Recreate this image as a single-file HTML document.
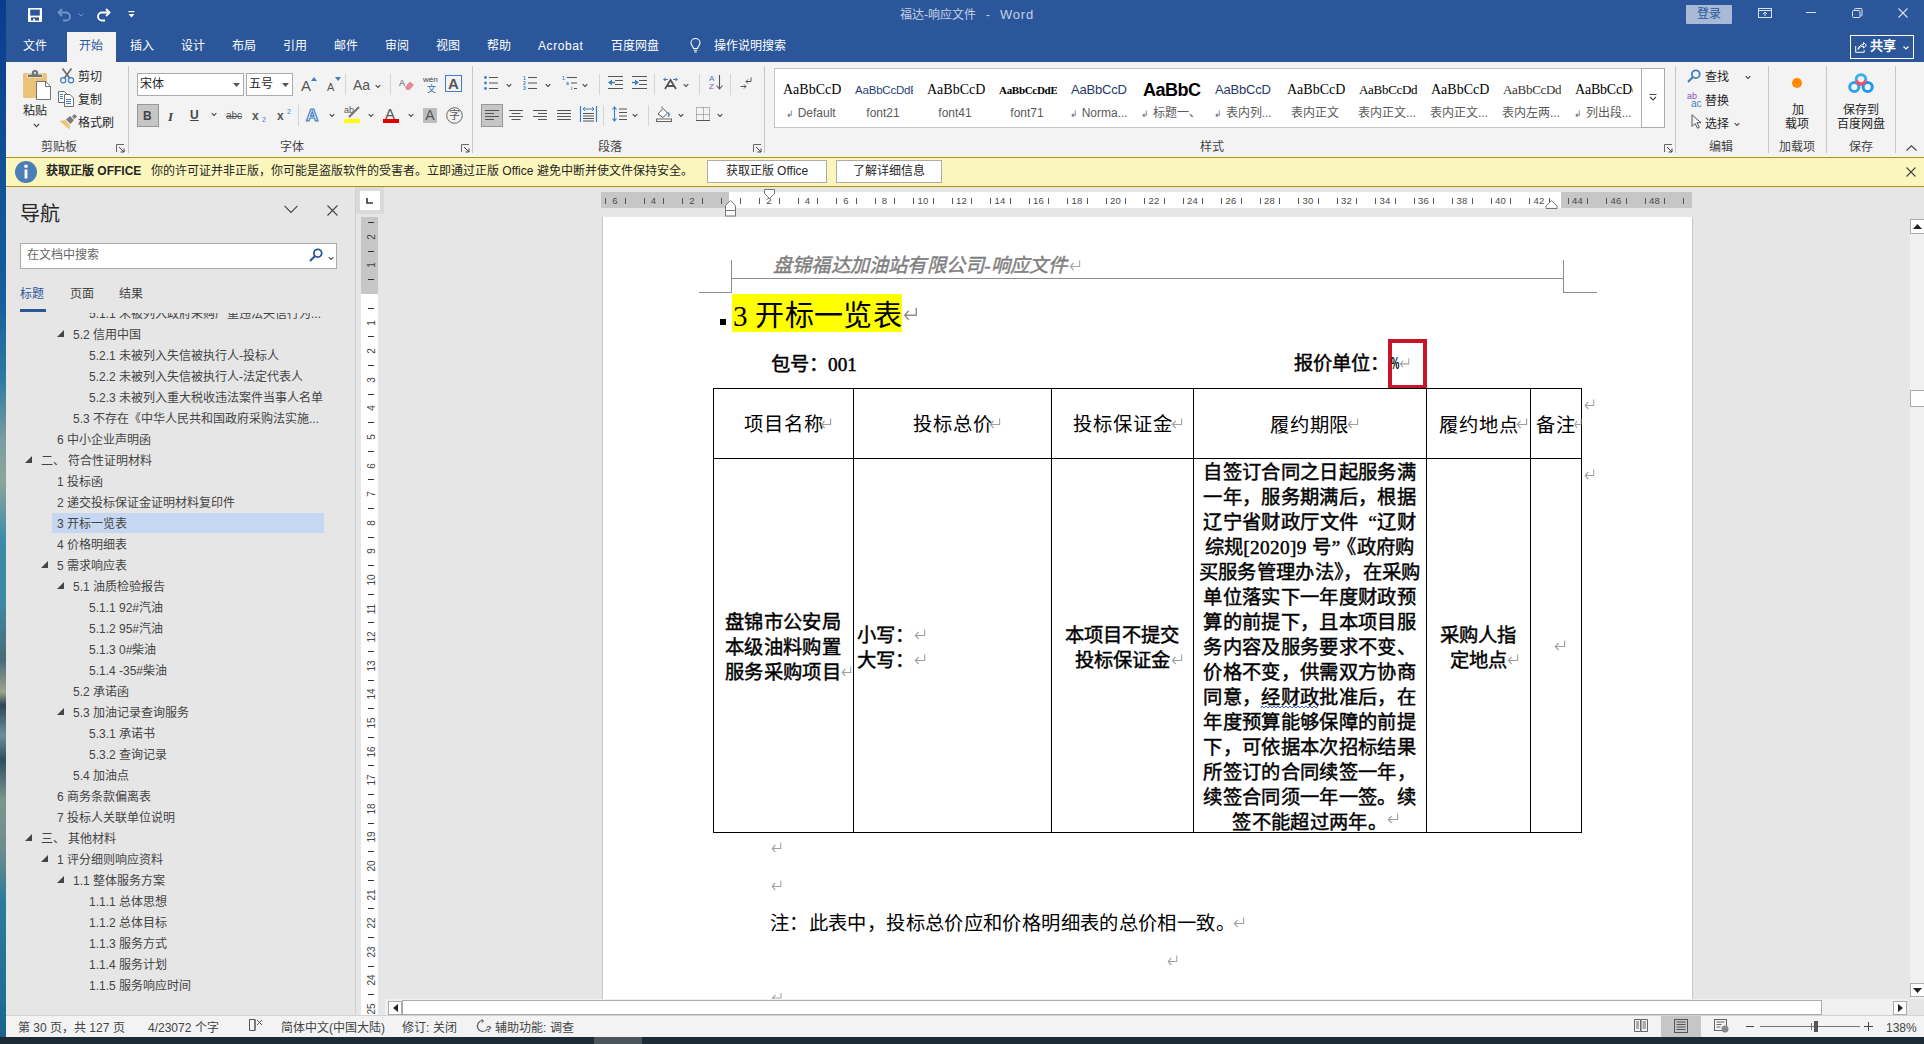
<!DOCTYPE html><html lang="zh-CN"><head><meta charset="utf-8"><title>Word</title><style>
*{box-sizing:border-box;margin:0;padding:0}
html,body{width:1924px;height:1044px;overflow:hidden}
body{position:relative;background:#E6E6E6;font-family:"Liberation Sans",sans-serif;font-size:12px;color:#262626}
.a{position:absolute;white-space:nowrap}
svg{position:absolute;overflow:visible}
</style></head><body>
<div class="a" style="left:0;top:0;width:6px;height:1044px;background:linear-gradient(180deg,#0A3C8E 0px,#0F4F96 150px,#165E9C 300px,#2E7AA0 380px,#7A9CA2 440px,#8FA59C 480px,#3D8BA8 540px,#3F8AA6 600px,#4A6A78 660px,#9DA58E 692px,#2C4556 705px,#6E8EA0 735px,#2F4E5E 760px,#7F958F 800px,#6D8C8E 850px,#2E7C9C 900px,#1F6E94 1000px,#1A5F88 1044px)"></div>
<div class="a" style="left:6px;top:0;width:1918px;height:62px;background:#2B579A"></div>
<div class="a" style="left:6px;top:62px;width:1918px;height:95px;background:#F3F3F3"></div>
<div class="a" style="left:6px;top:157px;width:1918px;height:30px;background:#FBF6BB;border-top:1px solid #B8900A;border-bottom:1px solid #B8900A"></div>
<div class="a" style="left:6px;top:187px;width:350px;height:827px;background:#E6E6E6;border-right:1px solid #CFCFCF"></div>
<div class="a" style="left:6px;top:1015px;width:1918px;height:22px;background:#F3F3F3;border-top:1px solid #D2D2D2"></div>
<div class="a" style="left:0;top:1037px;width:1924px;height:7px;background:#1D2B36"></div>
<div class="a" style="left:594px;top:1037px;width:48px;height:7px;background:#4A555C"></div>
<svg style="left:28px;top:8px" width="14" height="14" viewBox="0 0 14 14"><rect x="0" y="0" width="14" height="14" rx="0.8" fill="#fff"/><rect x="2.2" y="1.6" width="9.6" height="6" fill="#2B579A"/><rect x="3" y="9.4" width="8" height="3.2" fill="#2B579A"/><rect x="5" y="10.8" width="2" height="1.8" fill="#fff"/></svg>
<svg style="left:57px;top:8px" width="15" height="14" viewBox="0 0 15 14"><path d="M5 1L1.5 4.5L5 8M1.5 4.5H9a4 4 0 0 1 0 8H6" fill="none" stroke="#6F95C8" stroke-width="1.8"/></svg>
<svg style="left:78px;top:13px" width="6" height="4" viewBox="0 0 6 4"><path d="M0.5 0.5L3 3L5.5 0.5" fill="none" stroke="#6F95C8" stroke-width="1"/></svg>
<svg style="left:96px;top:8px" width="15" height="14" viewBox="0 0 15 14"><path d="M10 1L13.5 4.5L10 8M13.5 4.5H6a4 4 0 0 0 0 8H9" fill="none" stroke="#fff" stroke-width="1.8"/></svg>
<svg style="left:128px;top:11px" width="7" height="8" viewBox="0 0 7 8"><rect x="0.5" y="0" width="6" height="1.2" fill="#fff"/><path d="M0.5 3L3.5 6.5L6.5 3z" fill="#fff"/></svg>
<div class="a" style="left:900px;top:7px;font-size:12px;line-height:16px;color:#C5D1E6">福达-响应文件&nbsp;&nbsp;&nbsp;-&nbsp;&nbsp;&nbsp;<span style="letter-spacing:0.8px;font-size:13px">Word</span></div>
<div class="a" style="left:1686px;top:5px;width:46px;height:19px;background:#A8BAD6;border-radius:1px;color:#2B579A;font-size:12px;line-height:19px;text-align:center">登录</div>
<svg style="left:1758px;top:8px" width="14" height="10" viewBox="0 0 14 10"><rect x="0.5" y="0.5" width="13" height="9" fill="none" stroke="#D6E0EE" stroke-width="1"/><path d="M0.5 2.5h13" stroke="#D6E0EE"/><path d="M7 8V4M5 6l2-2l2 2" fill="none" stroke="#D6E0EE"/></svg>
<div class="a" style="left:1806px;top:12px;width:10px;height:1px;background:#D6E0EE"></div>
<svg style="left:1852px;top:8px" width="11" height="10" viewBox="0 0 11 10"><rect x="0.5" y="2.5" width="7.5" height="7" rx="1" fill="none" stroke="#D6E0EE"/><path d="M2.5 2.5V1.5a1 1 0 0 1 1-1h5.5a1 1 0 0 1 1 1v5.5a1 1 0 0 1-1 1H8" fill="none" stroke="#D6E0EE"/></svg>
<svg style="left:1898px;top:8px" width="10" height="10" viewBox="0 0 10 10"><path d="M0.5 0.5l9 9M9.5 0.5l-9 9" stroke="#D6E0EE" stroke-width="1.1"/></svg>
<div class="a" style="left:1850px;top:35px;width:64px;height:24px;border:1.5px solid #fff"></div>
<svg style="left:1855px;top:41px" width="12" height="12" viewBox="0 0 12 12"><path d="M0.7 5v6.3h8.5V9" fill="none" stroke="#fff" stroke-width="1"/><path d="M3 8.5C3.5 5 6 3.5 8.5 3.5V1.5L11.5 4.2L8.5 7V5.2C6.3 5.2 4.3 6.3 3 8.5z" fill="none" stroke="#fff" stroke-width="1"/></svg>
<div class="a" style="left:1870px;top:38px;font-size:13px;line-height:16px;color:#fff;font-weight:bold">共享</div>
<svg style="left:1903px;top:46px" width="6" height="4" viewBox="0 0 6 4"><path d="M0.5 0.5L3 3L5.5 0.5" fill="none" stroke="#fff" stroke-width="1.1"/></svg>
<div class="a" style="left:67px;top:32px;width:49px;height:30px;background:#F3F3F3"></div>
<div class="a" style="left:23px;top:38px;font-size:12px;line-height:16px;color:#fff">文件</div>
<div class="a" style="left:79px;top:38px;font-size:12px;line-height:16px;color:#2B579A">开始</div>
<div class="a" style="left:130px;top:38px;font-size:12px;line-height:16px;color:#fff">插入</div>
<div class="a" style="left:181px;top:38px;font-size:12px;line-height:16px;color:#fff">设计</div>
<div class="a" style="left:232px;top:38px;font-size:12px;line-height:16px;color:#fff">布局</div>
<div class="a" style="left:283px;top:38px;font-size:12px;line-height:16px;color:#fff">引用</div>
<div class="a" style="left:334px;top:38px;font-size:12px;line-height:16px;color:#fff">邮件</div>
<div class="a" style="left:385px;top:38px;font-size:12px;line-height:16px;color:#fff">审阅</div>
<div class="a" style="left:436px;top:38px;font-size:12px;line-height:16px;color:#fff">视图</div>
<div class="a" style="left:487px;top:38px;font-size:12px;line-height:16px;color:#fff">帮助</div>
<div class="a" style="left:538px;top:38px;font-size:12px;line-height:16px;color:#fff"><span style="letter-spacing:0.6px">Acrobat</span></div>
<div class="a" style="left:611px;top:38px;font-size:12px;line-height:16px;color:#fff">百度网盘</div>
<div class="a" style="left:714px;top:38px;font-size:12px;line-height:16px;color:#fff">操作说明搜索</div>
<svg style="left:690px;top:38px" width="11" height="15" viewBox="0 0 11 15"><path d="M3.5 10.5C3.5 8.5 1 7.5 1 5a4.5 4.5 0 0 1 9 0c0 2.5-2.5 3.5-2.5 5.5z" fill="none" stroke="#fff" stroke-width="1.1"/><path d="M3.8 12.3h3.4M4.3 14h2.4" stroke="#fff" stroke-width="1.1"/></svg>
<svg style="left:23px;top:70px" width="28" height="30" viewBox="0 0 28 30"><rect x="0" y="3" width="24" height="25" rx="1.5" fill="#EBC27A"/><rect x="4.5" y="3.5" width="15" height="4" fill="#F3F3F3"/><path d="M5 4.5h14v2.5H5z" fill="#737373"/><circle cx="12" cy="3.2" r="3.2" fill="#737373"/><circle cx="12" cy="3" r="1.1" fill="#F3F3F3"/><path d="M13.5 11.5h9.2l4.8 4.8v13.2h-14z" fill="#fff" stroke="#747474" stroke-width="1"/><path d="M22.5 11.5v5h5" fill="none" stroke="#747474" stroke-width="1"/></svg>
<div class="a" style="left:23px;top:103px;font-size:12px;line-height:16px;color:#262626;">粘贴</div>
<svg style="left:33px;top:123px" width="7" height="5" viewBox="0 0 7 5"><path d="M0.8 0.8L3.5 3.6L6.2 0.8" fill="none" stroke="#444" stroke-width="1.2"/></svg>
<svg style="left:59px;top:68px" width="16" height="16" viewBox="0 0 16 16"><path d="M3.5 0.5L10.8 10.5M12.5 0.5L5.2 10.5" stroke="#6A6A6A" stroke-width="1.7"/><circle cx="4.2" cy="12.2" r="2.6" fill="none" stroke="#3F7FC1" stroke-width="1.2"/><circle cx="12" cy="12.2" r="2.6" fill="none" stroke="#3F7FC1" stroke-width="1.2"/></svg>
<div class="a" style="left:78px;top:69px;font-size:12px;line-height:16px;color:#262626;">剪切</div>
<svg style="left:58px;top:91px" width="17" height="16" viewBox="0 0 17 16"><path d="M0.5 0.5h6l2.5 2.5v8.5H0.5z" fill="#fff" stroke="#6F6F6F"/><path d="M6.5 3.5h5.5l3.5 3.5v8.5h-9z" fill="#fff" stroke="#6F6F6F"/><path d="M2 3.5h3M2 5.5h3M2 7.5h3M8 8.5h5M8 10.5h5M8 12.5h5" stroke="#3F7FC1" stroke-width="1"/></svg>
<div class="a" style="left:78px;top:92px;font-size:12px;line-height:16px;color:#262626;">复制</div>
<svg style="left:59px;top:114px" width="18" height="16" viewBox="0 0 18 16"><path d="M0.5 7L6 6L11 11L10.5 15.5z" fill="#EBC27A"/><path d="M7 5.5L11 2L15 6L11.5 10z" fill="#7A7A7A"/><path d="M13 2.5L15.5 0L18 2.5L15.5 5z" fill="#7A7A7A"/></svg>
<div class="a" style="left:78px;top:115px;font-size:12px;line-height:16px;color:#262626;">格式刷</div>
<div class="a" style="left:41px;top:139px;font-size:12px;line-height:16px;color:#444;">剪贴板</div>
<svg style="left:116px;top:144px" width="9" height="9" viewBox="0 0 9 9"><path d="M0.5 8V0.5H8" fill="none" stroke="#666" stroke-width="1"/><path d="M3 3L8 8M8 4.5V8H4.5" fill="none" stroke="#444" stroke-width="1"/></svg>
<div class="a" style="left:128px;top:66px;width:1px;height:87px;background:#C6C6C6"></div>
<div class="a" style="left:137px;top:73px;width:107px;height:23px;background:#fff;border:1px solid #ABABAB"></div>
<div class="a" style="left:140px;top:76px;font-size:12px;line-height:16px;color:#262626;">宋体</div>
<svg style="left:233px;top:83px" width="7" height="4" viewBox="0 0 7 4"><path d="M0 0h7L3.5 4z" fill="#555"/></svg>
<div class="a" style="left:246px;top:73px;width:47px;height:23px;background:#fff;border:1px solid #ABABAB"></div>
<div class="a" style="left:249px;top:76px;font-size:12px;line-height:16px;color:#262626;">五号</div>
<svg style="left:282px;top:83px" width="7" height="4" viewBox="0 0 7 4"><path d="M0 0h7L3.5 4z" fill="#555"/></svg>
<div class="a" style="left:301px;top:76px;font-size:15px;line-height:19px;color:#555;font-weight:normal">A</div>
<svg style="left:311px;top:77px" width="6" height="4" viewBox="0 0 6 4"><path d="M0 4L3 0L6 4z" fill="#3F7FC1"/></svg>
<div class="a" style="left:327px;top:80px;font-size:11px;line-height:15px;color:#555;">A</div>
<svg style="left:335px;top:77px" width="6" height="4" viewBox="0 0 6 4"><path d="M0 0L3 4L6 0z" fill="#3F7FC1"/></svg>
<div class="a" style="left:345px;top:74px;width:1px;height:21px;background:#D5D5D5"></div>
<div class="a" style="left:353px;top:76px;font-size:14px;line-height:18px;color:#555;">Aa</div>
<svg style="left:375px;top:84px" width="6" height="5" viewBox="0 0 7 5"><path d="M0.8 0.8L3.5 3.6L6.2 0.8" fill="none" stroke="#444" stroke-width="1.2"/></svg>
<div class="a" style="left:390px;top:74px;width:1px;height:21px;background:#D5D5D5"></div>
<svg style="left:399px;top:77px" width="16" height="14" viewBox="0 0 16 14"><text x="0" y="9" font-size="9" fill="#555" font-family="Liberation Sans">A</text><path d="M6 10L11 4.5L15 8L10.5 13H7.5z" fill="#E88A96"/></svg>
<div class="a" style="left:423px;top:75px;font-size:8px;line-height:12px;color:#444;line-height:9px">wén</div>
<div class="a" style="left:427px;top:84px;font-size:9px;line-height:13px;color:#2E6DB4;line-height:10px">文</div>
<div class="a" style="left:445px;top:75px;width:17px;height:17px;border:1px solid #3F7FC1;color:#555;font-size:15px;line-height:15px;text-align:center;font-weight:bold">A</div>
<div class="a" style="left:137px;top:104px;width:22px;height:23px;background:#C6C6C6;border:1px solid #979797"></div>
<div class="a" style="left:143px;top:108px;font-size:12px;line-height:16px;color:#444;font-weight:bold">B</div>
<div class="a" style="left:168px;top:108px;font-size:13px;line-height:17px;color:#444;font-style:italic;font-family:Liberation Serif;font-weight:bold">I</div>
<div class="a" style="left:190px;top:107px;font-size:12px;line-height:16px;color:#444;text-decoration:underline;font-weight:bold">U</div>
<svg style="left:211px;top:112px" width="6" height="5" viewBox="0 0 7 5"><path d="M0.8 0.8L3.5 3.6L6.2 0.8" fill="none" stroke="#444" stroke-width="1.2"/></svg>
<div class="a" style="left:226px;top:109px;font-size:10px;line-height:14px;color:#555;text-decoration:line-through">abc</div>
<div class="a" style="left:252px;top:108px;font-size:12px;line-height:16px;color:#555;font-weight:bold">x</div>
<div class="a" style="left:262px;top:114px;font-size:7px;line-height:11px;color:#3F7FC1;">2</div>
<div class="a" style="left:277px;top:108px;font-size:12px;line-height:16px;color:#555;font-weight:bold">x</div>
<div class="a" style="left:287px;top:106px;font-size:7px;line-height:11px;color:#3F7FC1;">2</div>
<div class="a" style="left:298px;top:105px;width:1px;height:21px;background:#D5D5D5"></div>
<div class="a" style="left:306px;top:105px;font-size:17px;line-height:21px;color:#fff;-webkit-text-stroke:1.2px #3F7FC1;font-weight:bold">A</div>
<svg style="left:329px;top:113px" width="6" height="5" viewBox="0 0 7 5"><path d="M0.8 0.8L3.5 3.6L6.2 0.8" fill="none" stroke="#444" stroke-width="1.2"/></svg>
<div class="a" style="left:344px;top:104px;font-size:9px;line-height:13px;color:#555;">ab</div>
<svg style="left:346px;top:106px" width="16" height="12" viewBox="0 0 16 12"><path d="M3 11L13 1" stroke="#777" stroke-width="2.2"/></svg>
<div class="a" style="left:344px;top:119px;width:16px;height:4px;background:#FFFF00"></div>
<svg style="left:368px;top:113px" width="6" height="5" viewBox="0 0 7 5"><path d="M0.8 0.8L3.5 3.6L6.2 0.8" fill="none" stroke="#444" stroke-width="1.2"/></svg>
<div class="a" style="left:385px;top:104px;font-size:15px;line-height:19px;color:#555;">A</div>
<div class="a" style="left:383px;top:119px;width:16px;height:4px;background:#E40000"></div>
<svg style="left:408px;top:113px" width="6" height="5" viewBox="0 0 7 5"><path d="M0.8 0.8L3.5 3.6L6.2 0.8" fill="none" stroke="#444" stroke-width="1.2"/></svg>
<div class="a" style="left:423px;top:108px;width:14px;height:15px;background:#BDBDBD;color:#555;font-size:14px;line-height:15px;text-align:center">A</div>
<svg style="left:446px;top:107px" width="17" height="17" viewBox="0 0 17 17"><circle cx="8.5" cy="8.5" r="7.8" fill="none" stroke="#666" stroke-width="1"/></svg>
<div class="a" style="left:449px;top:109px;font-size:11px;line-height:15px;color:#555;line-height:12px">字</div>
<div class="a" style="left:280px;top:139px;font-size:12px;line-height:16px;color:#444;">字体</div>
<svg style="left:461px;top:144px" width="9" height="9" viewBox="0 0 9 9"><path d="M0.5 8V0.5H8" fill="none" stroke="#666" stroke-width="1"/><path d="M3 3L8 8M8 4.5V8H4.5" fill="none" stroke="#444" stroke-width="1"/></svg>
<div class="a" style="left:472px;top:66px;width:1px;height:87px;background:#C6C6C6"></div>
<svg style="left:484px;top:76px" width="15" height="14" viewBox="0 0 15 14"><circle cx="1.5" cy="1.5" r="1.4" fill="#3F7FC1"/><circle cx="1.5" cy="7" r="1.4" fill="#3F7FC1"/><circle cx="1.5" cy="12.5" r="1.4" fill="#3F7FC1"/><path d="M5 1.5h9M5 7h9M5 12.5h9" stroke="#555" stroke-width="1"/></svg>
<svg style="left:506px;top:83px" width="6" height="5" viewBox="0 0 7 5"><path d="M0.8 0.8L3.5 3.6L6.2 0.8" fill="none" stroke="#444" stroke-width="1.2"/></svg>
<svg style="left:523px;top:75px" width="15" height="15" viewBox="0 0 15 15"><text x="0" y="5" font-size="5" fill="#3F7FC1" font-family="Liberation Sans" font-weight="bold">1</text><text x="0" y="10" font-size="5" fill="#3F7FC1" font-family="Liberation Sans" font-weight="bold">2</text><text x="0" y="15" font-size="5" fill="#3F7FC1" font-family="Liberation Sans" font-weight="bold">3</text><path d="M5 2.5h9M5 8h9M5 13.5h9" stroke="#555" stroke-width="1"/></svg>
<svg style="left:545px;top:83px" width="6" height="5" viewBox="0 0 7 5"><path d="M0.8 0.8L3.5 3.6L6.2 0.8" fill="none" stroke="#444" stroke-width="1.2"/></svg>
<svg style="left:562px;top:75px" width="16" height="15" viewBox="0 0 16 15"><text x="0" y="5" font-size="5" fill="#3F7FC1" font-family="Liberation Sans" font-weight="bold">1</text><text x="4" y="10" font-size="5" fill="#3F7FC1" font-family="Liberation Sans" font-weight="bold">a</text><text x="9" y="15" font-size="5" fill="#3F7FC1" font-family="Liberation Sans" font-weight="bold">i</text><path d="M5 2.5h10M9 8h6M12 13.5h3" stroke="#555" stroke-width="1"/></svg>
<svg style="left:582px;top:83px" width="6" height="5" viewBox="0 0 7 5"><path d="M0.8 0.8L3.5 3.6L6.2 0.8" fill="none" stroke="#444" stroke-width="1.2"/></svg>
<div class="a" style="left:599px;top:74px;width:1px;height:21px;background:#D5D5D5"></div>
<svg style="left:607px;top:76px" width="17" height="14" viewBox="0 0 17 14"><path d="M1 0.5h15M8 4.5h8M8 8.5h8M1 12.5h15" stroke="#555" stroke-width="1"/><path d="M1 6.5L5 3.5V9.5z" fill="#3F7FC1"/><path d="M4 6.5h4" stroke="#3F7FC1" stroke-width="1.5"/></svg>
<svg style="left:631px;top:76px" width="17" height="14" viewBox="0 0 17 14"><path d="M1 0.5h15M8 4.5h8M8 8.5h8M1 12.5h15" stroke="#555" stroke-width="1"/><path d="M8 6.5L4 3.5V9.5z" fill="#3F7FC1"/><path d="M1 6.5h4" stroke="#3F7FC1" stroke-width="1.5"/></svg>
<div class="a" style="left:654px;top:74px;width:1px;height:21px;background:#D5D5D5"></div>
<svg style="left:662px;top:76px" width="17" height="14" viewBox="0 0 17 14"><path d="M3 13L8.5 4L14 13M5 10h7" fill="none" stroke="#555" stroke-width="1.8"/><path d="M1 3.5L3.5 1.5V5.5zM16 3.5L13.5 1.5V5.5z" fill="#3F7FC1"/><path d="M3 3.5h3M11 3.5h3" stroke="#3F7FC1" stroke-width="1"/></svg>
<svg style="left:683px;top:83px" width="6" height="5" viewBox="0 0 7 5"><path d="M0.8 0.8L3.5 3.6L6.2 0.8" fill="none" stroke="#444" stroke-width="1.2"/></svg>
<div class="a" style="left:699px;top:74px;width:1px;height:21px;background:#D5D5D5"></div>
<div class="a" style="left:709px;top:75px;font-size:8px;line-height:12px;color:#3F7FC1;line-height:8px">A</div>
<div class="a" style="left:709px;top:83px;font-size:8px;line-height:12px;color:#8E4FB8;line-height:8px">Z</div>
<svg style="left:716px;top:75px" width="7" height="15" viewBox="0 0 7 15"><path d="M3.5 0v14M0.5 10.5L3.5 14L6.5 10.5" fill="none" stroke="#555" stroke-width="1.1"/></svg>
<div class="a" style="left:730px;top:74px;width:1px;height:21px;background:#D5D5D5"></div>
<svg style="left:740px;top:77px" width="12" height="12" viewBox="0 0 12 12"><path d="M11 0.5v4H6M8 2.5L6 4.5L8 6.5" fill="none" stroke="#555" stroke-width="1"/><path d="M0.5 9.5H6M4 7.5L6 9.5L4 11.5" fill="none" stroke="#555" stroke-width="1"/></svg>
<div class="a" style="left:481px;top:104px;width:22px;height:23px;background:#C6C6C6;border:1px solid #979797"></div>
<svg style="left:485px;top:110px" width="14" height="11" viewBox="0 0 14 11"><path d="M0 0.5h14M0 3.5h9M0 6.5h14M0 9.5h9" stroke="#555" stroke-width="1"/></svg>
<svg style="left:509px;top:110px" width="14" height="11" viewBox="0 0 14 11"><path d="M0 0.5h14M2.5 3.5h9M0 6.5h14M2.5 9.5h9" stroke="#555" stroke-width="1"/></svg>
<svg style="left:533px;top:110px" width="14" height="11" viewBox="0 0 14 11"><path d="M0 0.5h14M5 3.5h9M0 6.5h14M5 9.5h9" stroke="#555" stroke-width="1"/></svg>
<svg style="left:557px;top:110px" width="14" height="11" viewBox="0 0 14 11"><path d="M0 0.5h14M0 3.5h14M0 6.5h14M0 9.5h14" stroke="#555" stroke-width="1"/></svg>
<svg style="left:580px;top:106px" width="17" height="16" viewBox="0 0 17 16"><path d="M0.5 0v16M16.5 0v16" stroke="#3F7FC1" stroke-width="1.2"/><path d="M3 3h11M5 1l-2 2l2 2M12 1l2 2l-2 2" fill="none" stroke="#3F7FC1" stroke-width="1"/><path d="M3 7.5h11M3 10h11M3 12.5h11M3 15h11" stroke="#555" stroke-width="1"/></svg>
<div class="a" style="left:603px;top:105px;width:1px;height:21px;background:#D5D5D5"></div>
<svg style="left:612px;top:106px" width="15" height="16" viewBox="0 0 15 16"><path d="M2.5 1v14M0.5 3.5L2.5 1L4.5 3.5M0.5 12.5L2.5 15L4.5 12.5" fill="none" stroke="#3F7FC1" stroke-width="1.1"/><path d="M7 3h8M7 6.5h8M7 10h8M7 13.5h8" stroke="#555" stroke-width="1"/></svg>
<svg style="left:632px;top:113px" width="6" height="5" viewBox="0 0 7 5"><path d="M0.8 0.8L3.5 3.6L6.2 0.8" fill="none" stroke="#444" stroke-width="1.2"/></svg>
<div class="a" style="left:648px;top:105px;width:1px;height:21px;background:#D5D5D5"></div>
<svg style="left:656px;top:106px" width="17" height="16" viewBox="0 0 17 16"><path d="M2 8L7 2.5L11.5 7L7 11.5z" fill="#fff" stroke="#555" stroke-width="1"/><path d="M6 2V0.5" stroke="#555"/><path d="M12 6.5c1.5 1 1.5 3 0 4" fill="none" stroke="#3F7FC1" stroke-width="1.5"/><rect x="0.5" y="13" width="15" height="2.5" fill="#fff" stroke="#666" stroke-width="1"/></svg>
<svg style="left:678px;top:113px" width="6" height="5" viewBox="0 0 7 5"><path d="M0.8 0.8L3.5 3.6L6.2 0.8" fill="none" stroke="#444" stroke-width="1.2"/></svg>
<svg style="left:696px;top:107px" width="14" height="14" viewBox="0 0 14 14"><path d="M0.5 0.5h13v13h-13zM7.5 0.5v13M0.5 7.5h13" fill="none" stroke="#777" stroke-width="1" stroke-dasharray="1 1"/><path d="M0 13.5h14" stroke="#555" stroke-width="1"/></svg>
<svg style="left:717px;top:113px" width="6" height="5" viewBox="0 0 7 5"><path d="M0.8 0.8L3.5 3.6L6.2 0.8" fill="none" stroke="#444" stroke-width="1.2"/></svg>
<div class="a" style="left:598px;top:139px;font-size:12px;line-height:16px;color:#444;">段落</div>
<svg style="left:753px;top:144px" width="9" height="9" viewBox="0 0 9 9"><path d="M0.5 8V0.5H8" fill="none" stroke="#666" stroke-width="1"/><path d="M3 3L8 8M8 4.5V8H4.5" fill="none" stroke="#444" stroke-width="1"/></svg>
<div class="a" style="left:764px;top:66px;width:1px;height:87px;background:#C6C6C6"></div>
<div class="a" style="left:774px;top:68px;width:868px;height:60px;background:#fff;border:1px solid #C6C6C6;border-right:none"></div>
<div class="a" style="left:783px;top:81px;width:58px;height:18px;overflow:hidden;text-align:left;font-family:Liberation Serif;font-size:14px;letter-spacing:0px;color:#000;line-height:18px">AaBbCcDc</div>
<div class="a" style="left:775px;top:105px;width:72px;text-align:center;font-size:12px;line-height:16px;color:#595959"><span style="font-size:9px;color:#666">↲</span> Default</div>
<div class="a" style="left:855px;top:81px;width:58px;height:18px;overflow:hidden;text-align:left;font-family:Liberation Sans;font-size:11.5px;font-weight:normal;letter-spacing:-0.2px;color:#1F3F7A;line-height:18px">AaBbCcDdE</div>
<div class="a" style="left:847px;top:105px;width:72px;text-align:center;font-size:12px;line-height:16px;color:#595959">font21</div>
<div class="a" style="left:927px;top:81px;width:58px;height:18px;overflow:hidden;text-align:left;font-family:Liberation Serif;font-size:14px;letter-spacing:0px;color:#000;line-height:18px">AaBbCcDc</div>
<div class="a" style="left:919px;top:105px;width:72px;text-align:center;font-size:12px;line-height:16px;color:#595959">font41</div>
<div class="a" style="left:999px;top:81px;width:58px;height:18px;overflow:hidden;text-align:left;font-family:Liberation Serif;font-size:11px;font-weight:bold;letter-spacing:-0.3px;color:#000;line-height:18px">AaBbCcDdEe</div>
<div class="a" style="left:991px;top:105px;width:72px;text-align:center;font-size:12px;line-height:16px;color:#595959">font71</div>
<div class="a" style="left:1071px;top:81px;width:58px;height:18px;overflow:hidden;text-align:left;font-family:Liberation Sans;font-size:13px;letter-spacing:-0.2px;color:#1F3864;line-height:18px">AaBbCcD</div>
<div class="a" style="left:1063px;top:105px;width:72px;text-align:center;font-size:12px;line-height:16px;color:#595959"><span style="font-size:9px;color:#666">↲</span> Norma...</div>
<div class="a" style="left:1143px;top:81px;width:58px;height:18px;overflow:hidden;text-align:left;font-family:Liberation Sans;font-size:18px;font-weight:bold;letter-spacing:-0.5px;color:#000;line-height:18px">AaBbCc</div>
<div class="a" style="left:1135px;top:105px;width:72px;text-align:center;font-size:12px;line-height:16px;color:#595959"><span style="font-size:9px;color:#666">↲</span> 标题一、</div>
<div class="a" style="left:1215px;top:81px;width:58px;height:18px;overflow:hidden;text-align:left;font-family:Liberation Sans;font-size:13px;letter-spacing:-0.2px;color:#1F3864;line-height:18px">AaBbCcD</div>
<div class="a" style="left:1207px;top:105px;width:72px;text-align:center;font-size:12px;line-height:16px;color:#595959"><span style="font-size:9px;color:#666">↲</span> 表内列...</div>
<div class="a" style="left:1287px;top:81px;width:58px;height:18px;overflow:hidden;text-align:left;font-family:Liberation Serif;font-size:14px;letter-spacing:0px;color:#000;line-height:18px">AaBbCcD</div>
<div class="a" style="left:1279px;top:105px;width:72px;text-align:center;font-size:12px;line-height:16px;color:#595959">表内正文</div>
<div class="a" style="left:1359px;top:81px;width:58px;height:18px;overflow:hidden;text-align:left;font-family:Liberation Serif;font-size:13px;letter-spacing:-0.3px;color:#000;line-height:18px">AaBbCcDdI</div>
<div class="a" style="left:1351px;top:105px;width:72px;text-align:center;font-size:12px;line-height:16px;color:#595959">表内正文...</div>
<div class="a" style="left:1431px;top:81px;width:58px;height:18px;overflow:hidden;text-align:left;font-family:Liberation Serif;font-size:14px;letter-spacing:0px;color:#000;line-height:18px">AaBbCcDc</div>
<div class="a" style="left:1423px;top:105px;width:72px;text-align:center;font-size:12px;line-height:16px;color:#595959">表内正文...</div>
<div class="a" style="left:1503px;top:81px;width:58px;height:18px;overflow:hidden;text-align:left;font-family:Liberation Serif;font-size:13px;letter-spacing:-0.3px;color:#333;line-height:18px">AaBbCcDdI</div>
<div class="a" style="left:1495px;top:105px;width:72px;text-align:center;font-size:12px;line-height:16px;color:#595959">表内左两...</div>
<div class="a" style="left:1575px;top:81px;width:58px;height:18px;overflow:hidden;text-align:left;font-family:Liberation Serif;font-size:14px;letter-spacing:-0.2px;color:#000;line-height:18px">AaBbCcDc</div>
<div class="a" style="left:1567px;top:105px;width:72px;text-align:center;font-size:12px;line-height:16px;color:#595959"><span style="font-size:9px;color:#666">↲</span> 列出段...</div>
<div class="a" style="left:1641px;top:68px;width:24px;height:60px;background:#fff;border:1px solid #ABABAB"></div>
<svg style="left:1649px;top:94px" width="8" height="7" viewBox="0 0 8 7"><path d="M0.5 0.5h7" stroke="#444"/><path d="M1 3L4 6L7 3" fill="none" stroke="#444" stroke-width="1.1"/></svg>
<div class="a" style="left:1200px;top:139px;font-size:12px;line-height:16px;color:#444;">样式</div>
<svg style="left:1664px;top:144px" width="9" height="9" viewBox="0 0 9 9"><path d="M0.5 8V0.5H8" fill="none" stroke="#666" stroke-width="1"/><path d="M3 3L8 8M8 4.5V8H4.5" fill="none" stroke="#444" stroke-width="1"/></svg>
<div class="a" style="left:1675px;top:66px;width:1px;height:87px;background:#C6C6C6"></div>
<svg style="left:1687px;top:69px" width="14" height="14" viewBox="0 0 14 14"><circle cx="8.8" cy="5.2" r="3.9" fill="none" stroke="#3F7FC1" stroke-width="1.8"/><path d="M6 8L1 13" stroke="#3F7FC1" stroke-width="2.2"/></svg>
<div class="a" style="left:1705px;top:69px;font-size:12px;line-height:16px;color:#262626;">查找</div>
<svg style="left:1745px;top:75px" width="6" height="5" viewBox="0 0 7 5"><path d="M0.8 0.8L3.5 3.6L6.2 0.8" fill="none" stroke="#444" stroke-width="1.2"/></svg>
<div class="a" style="left:1687px;top:92px;font-size:9px;line-height:13px;color:#8E4FB8;line-height:9px">ab</div>
<div class="a" style="left:1691px;top:99px;font-size:10px;line-height:14px;color:#3F7FC1;line-height:10px">ac</div>
<div class="a" style="left:1705px;top:93px;font-size:12px;line-height:16px;color:#262626;">替换</div>
<svg style="left:1691px;top:114px" width="11" height="15" viewBox="0 0 11 15"><path d="M1 0.8V12.5L4 9.5L6.5 14.2L8.3 13.3L5.9 8.7H10z" fill="none" stroke="#555" stroke-width="1"/></svg>
<div class="a" style="left:1705px;top:116px;font-size:12px;line-height:16px;color:#262626;">选择</div>
<svg style="left:1734px;top:122px" width="6" height="5" viewBox="0 0 7 5"><path d="M0.8 0.8L3.5 3.6L6.2 0.8" fill="none" stroke="#444" stroke-width="1.2"/></svg>
<div class="a" style="left:1709px;top:139px;font-size:12px;line-height:16px;color:#444;">编辑</div>
<div class="a" style="left:1768px;top:66px;width:1px;height:87px;background:#C6C6C6"></div>
<div class="a" style="left:1792px;top:78px;width:10px;height:10px;border-radius:50%;background:#FF8A00"></div>
<div class="a" style="left:1792px;top:102px;font-size:12px;line-height:16px;color:#262626;">加</div>
<div class="a" style="left:1785px;top:116px;font-size:12px;line-height:16px;color:#262626;">载项</div>
<div class="a" style="left:1779px;top:139px;font-size:12px;line-height:16px;color:#444;">加载项</div>
<div class="a" style="left:1826px;top:66px;width:1px;height:87px;background:#C6C6C6"></div>
<svg style="left:1848px;top:73px" width="26" height="21" viewBox="0 0 26 21"><circle cx="13" cy="6.5" r="4.8" fill="none" stroke="#3AB0EC" stroke-width="3"/><circle cx="6.3" cy="14" r="4.6" fill="none" stroke="#2EA3F2" stroke-width="3"/><circle cx="19.7" cy="14" r="4.6" fill="none" stroke="#1E98EA" stroke-width="3"/><path d="M8.4 7.5A4.8 4.8 0 0 0 17.6 7.5" fill="none" stroke="#F0506A" stroke-width="3"/></svg>
<div class="a" style="left:1843px;top:102px;font-size:12px;line-height:16px;color:#262626;">保存到</div>
<div class="a" style="left:1837px;top:116px;font-size:12px;line-height:16px;color:#262626;">百度网盘</div>
<div class="a" style="left:1849px;top:139px;font-size:12px;line-height:16px;color:#444;">保存</div>
<div class="a" style="left:1895px;top:66px;width:1px;height:87px;background:#C6C6C6"></div>
<svg style="left:1906px;top:145px" width="11" height="6" viewBox="0 0 11 6"><path d="M0.5 5.5L5.5 0.8L10.5 5.5" fill="none" stroke="#444" stroke-width="1.1"/></svg>
<svg style="left:15px;top:161px" width="22" height="22" viewBox="0 0 22 22"><circle cx="11" cy="11" r="11" fill="#4A7EB5"/><circle cx="11" cy="5.2" r="1.8" fill="#fff"/><rect x="9.6" y="8.5" width="2.8" height="9" fill="#fff"/></svg>
<div class="a" style="left:46px;top:163px;font-size:12px;line-height:16px;color:#262626;font-weight:bold">获取正版 OFFICE</div>
<div class="a" style="left:151px;top:163px;font-size:12px;line-height:16px;color:#262626;">你的许可证并非正版，你可能是盗版软件的受害者。立即通过正版 Office 避免中断并使文件保持安全。</div>
<div class="a" style="left:707px;top:160px;width:120px;height:23px;background:#fff;border:1px solid #ABABAB;text-align:center;font-size:12px;line-height:21px;color:#262626">获取正版 Office</div>
<div class="a" style="left:836px;top:160px;width:106px;height:23px;background:#fff;border:1px solid #ABABAB;text-align:center;font-size:12px;line-height:21px;color:#262626">了解详细信息</div>
<svg style="left:1906px;top:167px" width="10" height="10" viewBox="0 0 10 10"><path d="M0.5 0.5l9 9M9.5 0.5l-9 9" stroke="#444" stroke-width="1.1"/></svg>
<div class="a" style="left:20px;top:202px;font-size:20px;line-height:24px;color:#262626;line-height:24px">导航</div>
<svg style="left:284px;top:205px" width="14" height="9" viewBox="0 0 14 9"><path d="M0.5 0.8L7 7.5L13.5 0.8" fill="none" stroke="#444" stroke-width="1.1"/></svg>
<svg style="left:327px;top:205px" width="11" height="11" viewBox="0 0 11 11"><path d="M0.5 0.5l10 10M10.5 0.5l-10 10" stroke="#444" stroke-width="1.1"/></svg>
<div class="a" style="left:20px;top:243px;width:317px;height:26px;background:#fff;border:1px solid #ABABAB"></div>
<div class="a" style="left:27px;top:247px;font-size:12px;line-height:16px;color:#666;">在文档中搜索</div>
<svg style="left:309px;top:248px" width="14" height="14" viewBox="0 0 14 14"><circle cx="8.8" cy="5.2" r="3.9" fill="none" stroke="#2B579A" stroke-width="1.8"/><path d="M6 8L1 13" stroke="#2B579A" stroke-width="2.2"/></svg>
<svg style="left:328px;top:256px" width="6" height="5" viewBox="0 0 7 5"><path d="M0.8 0.8L3.5 3.6L6.2 0.8" fill="none" stroke="#444" stroke-width="1.2"/></svg>
<div class="a" style="left:20px;top:286px;font-size:12px;line-height:16px;color:#2B579A;">标题</div>
<div class="a" style="left:70px;top:286px;font-size:12px;line-height:16px;color:#444;">页面</div>
<div class="a" style="left:119px;top:286px;font-size:12px;line-height:16px;color:#444;">结果</div>
<div class="a" style="left:20px;top:309px;width:26px;height:3px;background:#2B579A"></div>
<div class="a" style="left:6px;top:313px;width:349px;height:700px;overflow:hidden">
<div class="a" style="left:83px;top:-7px;font-size:12px;line-height:16px;color:#444">5.1.1 未被列入政府采购严重违法失信行为...</div>
<svg style="left:51px;top:17px" width="7" height="7" viewBox="0 0 7 7"><path d="M7 0V7H0z" fill="#444"/></svg>
<div class="a" style="left:67px;top:14px;font-size:12px;line-height:16px;color:#444">5.2 信用中国</div>
<div class="a" style="left:83px;top:35px;font-size:12px;line-height:16px;color:#444">5.2.1 未被列入失信被执行人-投标人</div>
<div class="a" style="left:83px;top:56px;font-size:12px;line-height:16px;color:#444">5.2.2 未被列入失信被执行人-法定代表人</div>
<div class="a" style="left:83px;top:77px;font-size:12px;line-height:16px;color:#444">5.2.3 未被列入重大税收违法案件当事人名单</div>
<div class="a" style="left:67px;top:98px;font-size:12px;line-height:16px;color:#444">5.3 不存在《中华人民共和国政府采购法实施...</div>
<div class="a" style="left:51px;top:119px;font-size:12px;line-height:16px;color:#444">6 中小企业声明函</div>
<svg style="left:19px;top:143px" width="7" height="7" viewBox="0 0 7 7"><path d="M7 0V7H0z" fill="#444"/></svg>
<div class="a" style="left:35px;top:140px;font-size:12px;line-height:16px;color:#444">二、&nbsp;符合性证明材料</div>
<div class="a" style="left:51px;top:161px;font-size:12px;line-height:16px;color:#444">1 投标函</div>
<div class="a" style="left:51px;top:182px;font-size:12px;line-height:16px;color:#444">2 递交投标保证金证明材料复印件</div>
<div class="a" style="left:46px;top:200px;width:272px;height:20px;background:#C5D7F1"></div>
<div class="a" style="left:51px;top:203px;font-size:12px;line-height:16px;color:#444">3 开标一览表</div>
<div class="a" style="left:51px;top:224px;font-size:12px;line-height:16px;color:#444">4 价格明细表</div>
<svg style="left:35px;top:248px" width="7" height="7" viewBox="0 0 7 7"><path d="M7 0V7H0z" fill="#444"/></svg>
<div class="a" style="left:51px;top:245px;font-size:12px;line-height:16px;color:#444">5 需求响应表</div>
<svg style="left:51px;top:269px" width="7" height="7" viewBox="0 0 7 7"><path d="M7 0V7H0z" fill="#444"/></svg>
<div class="a" style="left:67px;top:266px;font-size:12px;line-height:16px;color:#444">5.1 油质检验报告</div>
<div class="a" style="left:83px;top:287px;font-size:12px;line-height:16px;color:#444">5.1.1 92#汽油</div>
<div class="a" style="left:83px;top:308px;font-size:12px;line-height:16px;color:#444">5.1.2 95#汽油</div>
<div class="a" style="left:83px;top:329px;font-size:12px;line-height:16px;color:#444">5.1.3 0#柴油</div>
<div class="a" style="left:83px;top:350px;font-size:12px;line-height:16px;color:#444">5.1.4 -35#柴油</div>
<div class="a" style="left:67px;top:371px;font-size:12px;line-height:16px;color:#444">5.2 承诺函</div>
<svg style="left:51px;top:395px" width="7" height="7" viewBox="0 0 7 7"><path d="M7 0V7H0z" fill="#444"/></svg>
<div class="a" style="left:67px;top:392px;font-size:12px;line-height:16px;color:#444">5.3 加油记录查询服务</div>
<div class="a" style="left:83px;top:413px;font-size:12px;line-height:16px;color:#444">5.3.1 承诺书</div>
<div class="a" style="left:83px;top:434px;font-size:12px;line-height:16px;color:#444">5.3.2 查询记录</div>
<div class="a" style="left:67px;top:455px;font-size:12px;line-height:16px;color:#444">5.4 加油点</div>
<div class="a" style="left:51px;top:476px;font-size:12px;line-height:16px;color:#444">6 商务条款偏离表</div>
<div class="a" style="left:51px;top:497px;font-size:12px;line-height:16px;color:#444">7 投标人关联单位说明</div>
<svg style="left:19px;top:521px" width="7" height="7" viewBox="0 0 7 7"><path d="M7 0V7H0z" fill="#444"/></svg>
<div class="a" style="left:35px;top:518px;font-size:12px;line-height:16px;color:#444">三、&nbsp;其他材料</div>
<svg style="left:35px;top:542px" width="7" height="7" viewBox="0 0 7 7"><path d="M7 0V7H0z" fill="#444"/></svg>
<div class="a" style="left:51px;top:539px;font-size:12px;line-height:16px;color:#444">1 评分细则响应资料</div>
<svg style="left:51px;top:563px" width="7" height="7" viewBox="0 0 7 7"><path d="M7 0V7H0z" fill="#444"/></svg>
<div class="a" style="left:67px;top:560px;font-size:12px;line-height:16px;color:#444">1.1 整体服务方案</div>
<div class="a" style="left:83px;top:581px;font-size:12px;line-height:16px;color:#444">1.1.1 总体思想</div>
<div class="a" style="left:83px;top:602px;font-size:12px;line-height:16px;color:#444">1.1.2 总体目标</div>
<div class="a" style="left:83px;top:623px;font-size:12px;line-height:16px;color:#444">1.1.3 服务方式</div>
<div class="a" style="left:83px;top:644px;font-size:12px;line-height:16px;color:#444">1.1.4 服务计划</div>
<div class="a" style="left:83px;top:665px;font-size:12px;line-height:16px;color:#444">1.1.5 服务响应时间</div>
</div>
<div class="a" style="left:356px;top:187px;width:28px;height:27px;background:#DADADA"></div>
<div class="a" style="left:360px;top:191px;width:20px;height:19px;background:#fff"></div>
<svg style="left:366px;top:198px" width="7" height="6" viewBox="0 0 7 6"><path d="M1 0v5h6" fill="none" stroke="#333" stroke-width="1.6"/></svg>
<div class="a" style="left:361px;top:217px;width:17px;height:77px;background:#C6C6C6"></div>
<div class="a" style="left:356px;top:999px;width:29px;height:16px;background:#E6E6E6"></div>
<div class="a" style="left:361px;top:294px;width:17px;height:721px;background:#fff"></div>
<div class="a" style="left:368px;top:222.0px;width:6px;height:1px;background:#333"></div>
<div class="a" style="left:363.5px;top:230.8px;width:16px;height:12px;font-size:10px;line-height:12px;text-align:center;color:#444;transform:rotate(-90deg)">2</div>
<div class="a" style="left:368px;top:250.6px;width:6px;height:1px;background:#333"></div>
<div class="a" style="left:363.5px;top:259.4px;width:16px;height:12px;font-size:10px;line-height:12px;text-align:center;color:#444;transform:rotate(-90deg)">1</div>
<div class="a" style="left:368px;top:279.2px;width:6px;height:1px;background:#333"></div>
<div class="a" style="left:368px;top:307.8px;width:6px;height:1px;background:#333"></div>
<div class="a" style="left:363.5px;top:316.6px;width:16px;height:12px;font-size:10px;line-height:12px;text-align:center;color:#444;transform:rotate(-90deg)">1</div>
<div class="a" style="left:368px;top:336.4px;width:6px;height:1px;background:#333"></div>
<div class="a" style="left:363.5px;top:345.2px;width:16px;height:12px;font-size:10px;line-height:12px;text-align:center;color:#444;transform:rotate(-90deg)">2</div>
<div class="a" style="left:368px;top:365.0px;width:6px;height:1px;background:#333"></div>
<div class="a" style="left:363.5px;top:373.8px;width:16px;height:12px;font-size:10px;line-height:12px;text-align:center;color:#444;transform:rotate(-90deg)">3</div>
<div class="a" style="left:368px;top:393.6px;width:6px;height:1px;background:#333"></div>
<div class="a" style="left:363.5px;top:402.4px;width:16px;height:12px;font-size:10px;line-height:12px;text-align:center;color:#444;transform:rotate(-90deg)">4</div>
<div class="a" style="left:368px;top:422.2px;width:6px;height:1px;background:#333"></div>
<div class="a" style="left:363.5px;top:431.0px;width:16px;height:12px;font-size:10px;line-height:12px;text-align:center;color:#444;transform:rotate(-90deg)">5</div>
<div class="a" style="left:368px;top:450.8px;width:6px;height:1px;background:#333"></div>
<div class="a" style="left:363.5px;top:459.6px;width:16px;height:12px;font-size:10px;line-height:12px;text-align:center;color:#444;transform:rotate(-90deg)">6</div>
<div class="a" style="left:368px;top:479.4px;width:6px;height:1px;background:#333"></div>
<div class="a" style="left:363.5px;top:488.2px;width:16px;height:12px;font-size:10px;line-height:12px;text-align:center;color:#444;transform:rotate(-90deg)">7</div>
<div class="a" style="left:368px;top:508.0px;width:6px;height:1px;background:#333"></div>
<div class="a" style="left:363.5px;top:516.8px;width:16px;height:12px;font-size:10px;line-height:12px;text-align:center;color:#444;transform:rotate(-90deg)">8</div>
<div class="a" style="left:368px;top:536.6px;width:6px;height:1px;background:#333"></div>
<div class="a" style="left:363.5px;top:545.4px;width:16px;height:12px;font-size:10px;line-height:12px;text-align:center;color:#444;transform:rotate(-90deg)">9</div>
<div class="a" style="left:368px;top:565.2px;width:6px;height:1px;background:#333"></div>
<div class="a" style="left:363.5px;top:574.0px;width:16px;height:12px;font-size:10px;line-height:12px;text-align:center;color:#444;transform:rotate(-90deg)">10</div>
<div class="a" style="left:368px;top:593.8px;width:6px;height:1px;background:#333"></div>
<div class="a" style="left:363.5px;top:602.6px;width:16px;height:12px;font-size:10px;line-height:12px;text-align:center;color:#444;transform:rotate(-90deg)">11</div>
<div class="a" style="left:368px;top:622.4px;width:6px;height:1px;background:#333"></div>
<div class="a" style="left:363.5px;top:631.2px;width:16px;height:12px;font-size:10px;line-height:12px;text-align:center;color:#444;transform:rotate(-90deg)">12</div>
<div class="a" style="left:368px;top:651.0px;width:6px;height:1px;background:#333"></div>
<div class="a" style="left:363.5px;top:659.8px;width:16px;height:12px;font-size:10px;line-height:12px;text-align:center;color:#444;transform:rotate(-90deg)">13</div>
<div class="a" style="left:368px;top:679.6px;width:6px;height:1px;background:#333"></div>
<div class="a" style="left:363.5px;top:688.4px;width:16px;height:12px;font-size:10px;line-height:12px;text-align:center;color:#444;transform:rotate(-90deg)">14</div>
<div class="a" style="left:368px;top:708.2px;width:6px;height:1px;background:#333"></div>
<div class="a" style="left:363.5px;top:717.0px;width:16px;height:12px;font-size:10px;line-height:12px;text-align:center;color:#444;transform:rotate(-90deg)">15</div>
<div class="a" style="left:368px;top:736.8px;width:6px;height:1px;background:#333"></div>
<div class="a" style="left:363.5px;top:745.6px;width:16px;height:12px;font-size:10px;line-height:12px;text-align:center;color:#444;transform:rotate(-90deg)">16</div>
<div class="a" style="left:368px;top:765.4px;width:6px;height:1px;background:#333"></div>
<div class="a" style="left:363.5px;top:774.2px;width:16px;height:12px;font-size:10px;line-height:12px;text-align:center;color:#444;transform:rotate(-90deg)">17</div>
<div class="a" style="left:368px;top:794.0px;width:6px;height:1px;background:#333"></div>
<div class="a" style="left:363.5px;top:802.8px;width:16px;height:12px;font-size:10px;line-height:12px;text-align:center;color:#444;transform:rotate(-90deg)">18</div>
<div class="a" style="left:368px;top:822.6px;width:6px;height:1px;background:#333"></div>
<div class="a" style="left:363.5px;top:831.4px;width:16px;height:12px;font-size:10px;line-height:12px;text-align:center;color:#444;transform:rotate(-90deg)">19</div>
<div class="a" style="left:368px;top:851.2px;width:6px;height:1px;background:#333"></div>
<div class="a" style="left:363.5px;top:860.0px;width:16px;height:12px;font-size:10px;line-height:12px;text-align:center;color:#444;transform:rotate(-90deg)">20</div>
<div class="a" style="left:368px;top:879.8px;width:6px;height:1px;background:#333"></div>
<div class="a" style="left:363.5px;top:888.6px;width:16px;height:12px;font-size:10px;line-height:12px;text-align:center;color:#444;transform:rotate(-90deg)">21</div>
<div class="a" style="left:368px;top:908.4px;width:6px;height:1px;background:#333"></div>
<div class="a" style="left:363.5px;top:917.2px;width:16px;height:12px;font-size:10px;line-height:12px;text-align:center;color:#444;transform:rotate(-90deg)">22</div>
<div class="a" style="left:368px;top:937.0px;width:6px;height:1px;background:#333"></div>
<div class="a" style="left:363.5px;top:945.8px;width:16px;height:12px;font-size:10px;line-height:12px;text-align:center;color:#444;transform:rotate(-90deg)">23</div>
<div class="a" style="left:368px;top:965.6px;width:6px;height:1px;background:#333"></div>
<div class="a" style="left:363.5px;top:974.4px;width:16px;height:12px;font-size:10px;line-height:12px;text-align:center;color:#444;transform:rotate(-90deg)">24</div>
<div class="a" style="left:368px;top:994.2px;width:6px;height:1px;background:#333"></div>
<div class="a" style="left:363.5px;top:1003.0px;width:16px;height:12px;font-size:10px;line-height:12px;text-align:center;color:#444;transform:rotate(-90deg)">25</div>
<div class="a" style="left:601px;top:192px;width:128px;height:16px;background:#C6C6C6"></div>
<div class="a" style="left:729px;top:192px;width:832px;height:16px;background:#fff"></div>
<div class="a" style="left:1561px;top:192px;width:131px;height:16px;background:#C6C6C6"></div>
<div class="a" style="left:605.3px;top:198px;width:1px;height:6px;background:#555"></div>
<div class="a" style="left:604.9px;top:194px;width:20px;text-align:center;font-size:9.5px;line-height:14px;color:#4A4A4A">6</div>
<div class="a" style="left:624.5px;top:198px;width:1px;height:6px;background:#555"></div>
<div class="a" style="left:643.8px;top:198px;width:1px;height:6px;background:#555"></div>
<div class="a" style="left:643.4px;top:194px;width:20px;text-align:center;font-size:9.5px;line-height:14px;color:#4A4A4A">4</div>
<div class="a" style="left:663.0px;top:198px;width:1px;height:6px;background:#555"></div>
<div class="a" style="left:682.3px;top:198px;width:1px;height:6px;background:#555"></div>
<div class="a" style="left:681.9px;top:194px;width:20px;text-align:center;font-size:9.5px;line-height:14px;color:#4A4A4A">2</div>
<div class="a" style="left:701.5px;top:198px;width:1px;height:6px;background:#555"></div>
<div class="a" style="left:720.8px;top:198px;width:1px;height:6px;background:#555"></div>
<div class="a" style="left:740.0px;top:198px;width:1px;height:6px;background:#555"></div>
<div class="a" style="left:759.3px;top:198px;width:1px;height:6px;background:#555"></div>
<div class="a" style="left:758.9px;top:194px;width:20px;text-align:center;font-size:9.5px;line-height:14px;color:#4A4A4A">2</div>
<div class="a" style="left:778.5px;top:198px;width:1px;height:6px;background:#555"></div>
<div class="a" style="left:797.8px;top:198px;width:1px;height:6px;background:#555"></div>
<div class="a" style="left:797.4px;top:194px;width:20px;text-align:center;font-size:9.5px;line-height:14px;color:#4A4A4A">4</div>
<div class="a" style="left:817.0px;top:198px;width:1px;height:6px;background:#555"></div>
<div class="a" style="left:836.3px;top:198px;width:1px;height:6px;background:#555"></div>
<div class="a" style="left:835.9px;top:194px;width:20px;text-align:center;font-size:9.5px;line-height:14px;color:#4A4A4A">6</div>
<div class="a" style="left:855.5px;top:198px;width:1px;height:6px;background:#555"></div>
<div class="a" style="left:874.8px;top:198px;width:1px;height:6px;background:#555"></div>
<div class="a" style="left:874.4px;top:194px;width:20px;text-align:center;font-size:9.5px;line-height:14px;color:#4A4A4A">8</div>
<div class="a" style="left:894.0px;top:198px;width:1px;height:6px;background:#555"></div>
<div class="a" style="left:913.3px;top:198px;width:1px;height:6px;background:#555"></div>
<div class="a" style="left:912.9px;top:194px;width:20px;text-align:center;font-size:9.5px;line-height:14px;color:#4A4A4A">10</div>
<div class="a" style="left:932.5px;top:198px;width:1px;height:6px;background:#555"></div>
<div class="a" style="left:951.8px;top:198px;width:1px;height:6px;background:#555"></div>
<div class="a" style="left:951.4px;top:194px;width:20px;text-align:center;font-size:9.5px;line-height:14px;color:#4A4A4A">12</div>
<div class="a" style="left:971.0px;top:198px;width:1px;height:6px;background:#555"></div>
<div class="a" style="left:990.3px;top:198px;width:1px;height:6px;background:#555"></div>
<div class="a" style="left:989.9px;top:194px;width:20px;text-align:center;font-size:9.5px;line-height:14px;color:#4A4A4A">14</div>
<div class="a" style="left:1009.5px;top:198px;width:1px;height:6px;background:#555"></div>
<div class="a" style="left:1028.8px;top:198px;width:1px;height:6px;background:#555"></div>
<div class="a" style="left:1028.4px;top:194px;width:20px;text-align:center;font-size:9.5px;line-height:14px;color:#4A4A4A">16</div>
<div class="a" style="left:1048.0px;top:198px;width:1px;height:6px;background:#555"></div>
<div class="a" style="left:1067.3px;top:198px;width:1px;height:6px;background:#555"></div>
<div class="a" style="left:1066.9px;top:194px;width:20px;text-align:center;font-size:9.5px;line-height:14px;color:#4A4A4A">18</div>
<div class="a" style="left:1086.5px;top:198px;width:1px;height:6px;background:#555"></div>
<div class="a" style="left:1105.8px;top:198px;width:1px;height:6px;background:#555"></div>
<div class="a" style="left:1105.4px;top:194px;width:20px;text-align:center;font-size:9.5px;line-height:14px;color:#4A4A4A">20</div>
<div class="a" style="left:1125.0px;top:198px;width:1px;height:6px;background:#555"></div>
<div class="a" style="left:1144.3px;top:198px;width:1px;height:6px;background:#555"></div>
<div class="a" style="left:1143.9px;top:194px;width:20px;text-align:center;font-size:9.5px;line-height:14px;color:#4A4A4A">22</div>
<div class="a" style="left:1163.5px;top:198px;width:1px;height:6px;background:#555"></div>
<div class="a" style="left:1182.8px;top:198px;width:1px;height:6px;background:#555"></div>
<div class="a" style="left:1182.4px;top:194px;width:20px;text-align:center;font-size:9.5px;line-height:14px;color:#4A4A4A">24</div>
<div class="a" style="left:1202.0px;top:198px;width:1px;height:6px;background:#555"></div>
<div class="a" style="left:1221.3px;top:198px;width:1px;height:6px;background:#555"></div>
<div class="a" style="left:1220.9px;top:194px;width:20px;text-align:center;font-size:9.5px;line-height:14px;color:#4A4A4A">26</div>
<div class="a" style="left:1240.5px;top:198px;width:1px;height:6px;background:#555"></div>
<div class="a" style="left:1259.8px;top:198px;width:1px;height:6px;background:#555"></div>
<div class="a" style="left:1259.4px;top:194px;width:20px;text-align:center;font-size:9.5px;line-height:14px;color:#4A4A4A">28</div>
<div class="a" style="left:1279.0px;top:198px;width:1px;height:6px;background:#555"></div>
<div class="a" style="left:1298.3px;top:198px;width:1px;height:6px;background:#555"></div>
<div class="a" style="left:1297.9px;top:194px;width:20px;text-align:center;font-size:9.5px;line-height:14px;color:#4A4A4A">30</div>
<div class="a" style="left:1317.5px;top:198px;width:1px;height:6px;background:#555"></div>
<div class="a" style="left:1336.8px;top:198px;width:1px;height:6px;background:#555"></div>
<div class="a" style="left:1336.4px;top:194px;width:20px;text-align:center;font-size:9.5px;line-height:14px;color:#4A4A4A">32</div>
<div class="a" style="left:1356.0px;top:198px;width:1px;height:6px;background:#555"></div>
<div class="a" style="left:1375.3px;top:198px;width:1px;height:6px;background:#555"></div>
<div class="a" style="left:1374.9px;top:194px;width:20px;text-align:center;font-size:9.5px;line-height:14px;color:#4A4A4A">34</div>
<div class="a" style="left:1394.5px;top:198px;width:1px;height:6px;background:#555"></div>
<div class="a" style="left:1413.8px;top:198px;width:1px;height:6px;background:#555"></div>
<div class="a" style="left:1413.4px;top:194px;width:20px;text-align:center;font-size:9.5px;line-height:14px;color:#4A4A4A">36</div>
<div class="a" style="left:1433.0px;top:198px;width:1px;height:6px;background:#555"></div>
<div class="a" style="left:1452.3px;top:198px;width:1px;height:6px;background:#555"></div>
<div class="a" style="left:1451.9px;top:194px;width:20px;text-align:center;font-size:9.5px;line-height:14px;color:#4A4A4A">38</div>
<div class="a" style="left:1471.5px;top:198px;width:1px;height:6px;background:#555"></div>
<div class="a" style="left:1490.8px;top:198px;width:1px;height:6px;background:#555"></div>
<div class="a" style="left:1490.4px;top:194px;width:20px;text-align:center;font-size:9.5px;line-height:14px;color:#4A4A4A">40</div>
<div class="a" style="left:1510.0px;top:198px;width:1px;height:6px;background:#555"></div>
<div class="a" style="left:1529.3px;top:198px;width:1px;height:6px;background:#555"></div>
<div class="a" style="left:1528.9px;top:194px;width:20px;text-align:center;font-size:9.5px;line-height:14px;color:#4A4A4A">42</div>
<div class="a" style="left:1548.5px;top:198px;width:1px;height:6px;background:#555"></div>
<div class="a" style="left:1567.8px;top:198px;width:1px;height:6px;background:#555"></div>
<div class="a" style="left:1567.4px;top:194px;width:20px;text-align:center;font-size:9.5px;line-height:14px;color:#4A4A4A">44</div>
<div class="a" style="left:1587.0px;top:198px;width:1px;height:6px;background:#555"></div>
<div class="a" style="left:1606.3px;top:198px;width:1px;height:6px;background:#555"></div>
<div class="a" style="left:1605.9px;top:194px;width:20px;text-align:center;font-size:9.5px;line-height:14px;color:#4A4A4A">46</div>
<div class="a" style="left:1625.5px;top:198px;width:1px;height:6px;background:#555"></div>
<div class="a" style="left:1644.8px;top:198px;width:1px;height:6px;background:#555"></div>
<div class="a" style="left:1644.4px;top:194px;width:20px;text-align:center;font-size:9.5px;line-height:14px;color:#4A4A4A">48</div>
<div class="a" style="left:1664.0px;top:198px;width:1px;height:6px;background:#555"></div>
<div class="a" style="left:1683.3px;top:198px;width:1px;height:6px;background:#555"></div>
<svg style="left:724px;top:200px" width="13" height="17" viewBox="0 0 13 17"><path d="M6.5 0.5L11.5 5.5V10.5H1.5V5.5z" fill="#fff" stroke="#777" stroke-width="1"/><rect x="1.5" y="10.5" width="10" height="5.5" fill="#fff" stroke="#777" stroke-width="1"/></svg>
<svg style="left:764px;top:189px" width="12" height="10" viewBox="0 0 12 10"><path d="M0.5 0.5h10V4.5L5.5 9.5L0.5 4.5z" fill="#fff" stroke="#777" stroke-width="1"/></svg>
<svg style="left:1545px;top:200px" width="13" height="9" viewBox="0 0 13 9"><path d="M6.5 0.5L12 6v2.5H1V6z" fill="#fff" stroke="#777" stroke-width="1"/></svg>
<div class="a" style="left:602px;top:217px;width:1091px;height:782px;background:#fff;border-left:1px solid #C6C6C6;border-right:1px solid #C6C6C6"></div>
<div class="a" style="left:1910px;top:219px;width:14px;height:780px;background:#F0F0F0"></div>
<div class="a" style="left:1910px;top:219px;width:14px;height:15px;background:#fff;border:1px solid #ABABAB;border-right:none"></div>
<svg style="left:1913px;top:224px" width="9" height="5" viewBox="0 0 9 5"><path d="M0 5L4.5 0L9 5z" fill="#222"/></svg>
<div class="a" style="left:1910px;top:390px;width:14px;height:17px;background:#fff;border:1px solid #ABABAB;border-right:none"></div>
<div class="a" style="left:1910px;top:983px;width:14px;height:14px;background:#fff;border:1px solid #ABABAB;border-right:none"></div>
<svg style="left:1913px;top:988px" width="9" height="5" viewBox="0 0 9 5"><path d="M0 0L4.5 5L9 0z" fill="#222"/></svg>
<div class="a" style="left:385px;top:999px;width:1522px;height:16px;background:#F0F0F0"></div>
<div class="a" style="left:1907px;top:999px;width:17px;height:16px;background:#E6E6E6"></div>
<div class="a" style="left:388px;top:1001px;width:14px;height:14px;background:#fff;border:1px solid #ABABAB"></div>
<svg style="left:393px;top:1004px" width="5" height="8" viewBox="0 0 5 8"><path d="M5 0L0 4L5 8z" fill="#222"/></svg>
<div class="a" style="left:402px;top:1000px;width:1420px;height:15px;background:#fff;border:1px solid #ABABAB"></div>
<div class="a" style="left:1893px;top:1001px;width:14px;height:14px;background:#fff;border:1px solid #ABABAB"></div>
<svg style="left:1898px;top:1004px" width="5" height="8" viewBox="0 0 5 8"><path d="M0 0L5 4L0 8z" fill="#222"/></svg>
<div class="a" style="left:18px;top:1020px;font-size:12px;line-height:16px;color:#444;">第 30 页，共 127 页</div>
<div class="a" style="left:148px;top:1020px;font-size:12px;line-height:16px;color:#444;">4/23072 个字</div>
<div class="a" style="left:281px;top:1020px;font-size:12px;line-height:16px;color:#444;">简体中文(中国大陆)</div>
<div class="a" style="left:402px;top:1020px;font-size:12px;line-height:16px;color:#444;">修订: 关闭</div>
<div class="a" style="left:495px;top:1020px;font-size:12px;line-height:16px;color:#444;">辅助功能: 调查</div>
<svg style="left:249px;top:1019px" width="14" height="13" viewBox="0 0 14 13"><path d="M0.5 0.5h5.5v11H0.5zM6 0.5v11" fill="none" stroke="#555" stroke-width="1"/><path d="M8 1l5 5M13 1l-5 5" stroke="#555" stroke-width="1"/></svg>
<svg style="left:477px;top:1019px" width="16" height="14" viewBox="0 0 16 14"><path d="M6 1.5A5.5 5.5 0 1 0 10.5 10" fill="none" stroke="#555" stroke-width="1.2"/><path d="M4.5 0.5L6.5 1.8L5 3.8" fill="none" stroke="#555" stroke-width="1"/><text x="9" y="13" font-size="9" font-weight="bold" fill="#555" font-family="Liberation Sans">?</text></svg>
<svg style="left:1634px;top:1019px" width="14" height="13" viewBox="0 0 14 13"><path d="M0.5 0.5h6v12h-6zM7 0.5h6.5v12H7z" fill="none" stroke="#666"/><path d="M2 3h3M2 5h3M2 7h3M2 9h3M8.5 3h3.5M8.5 5h3.5M8.5 7h3.5M8.5 9h3.5" stroke="#666"/></svg>
<div class="a" style="left:1661px;top:1016px;width:40px;height:21px;background:#C6C6C6"></div>
<svg style="left:1674px;top:1019px" width="14" height="14" viewBox="0 0 14 14"><rect x="0.5" y="0.5" width="13" height="13" fill="none" stroke="#555"/><path d="M2.5 3h9M2.5 5.5h9M2.5 8h9M2.5 10.5h9" stroke="#555"/></svg>
<svg style="left:1714px;top:1019px" width="15" height="14" viewBox="0 0 15 14"><rect x="0.5" y="0.5" width="12" height="11" fill="none" stroke="#666"/><path d="M2.5 3h8M2.5 5.5h5M2.5 8h4" stroke="#666"/><circle cx="11" cy="10" r="3.5" fill="#888"/></svg>
<div class="a" style="left:1746px;top:1026px;width:8px;height:1px;background:#444"></div>
<div class="a" style="left:1760px;top:1026px;width:100px;height:1px;background:#777"></div>
<div class="a" style="left:1814px;top:1021px;width:4px;height:11px;background:#555"></div>
<div class="a" style="left:1811px;top:1023px;width:1px;height:7px;background:#777"></div>
<div class="a" style="left:1864px;top:1026px;width:9px;height:1px;background:#444"></div>
<div class="a" style="left:1868px;top:1022px;width:1px;height:9px;background:#444"></div>
<div class="a" style="left:1886px;top:1020px;font-size:12px;line-height:16px;color:#444;">138%</div>
<div class="a" style="left:773px;top:253px;font-family:'Liberation Serif',serif;font-size:19.3px;line-height:25px;font-weight:400;-webkit-text-stroke:0.45px #7F7F7F;color:#7F7F7F;font-style:italic;letter-spacing:0.2px">盘锦福达加油站有限公司-响应文件</div>
<svg style="left:1069px;top:260px" width="12" height="11" viewBox="0 0 13 11" preserveAspectRatio="none"><path d="M11.5 0.5V6.5H1.5M5 3L1.5 6.5L5 10" fill="none" stroke="#A6A6A6" stroke-width="1.2"/></svg>
<div class="a" style="left:731px;top:278px;width:833px;height:1px;background:#8C8C8C"></div>
<div class="a" style="left:731px;top:260px;width:1px;height:33px;background:#8C8C8C"></div>
<div class="a" style="left:699px;top:292px;width:33px;height:1px;background:#8C8C8C"></div>
<div class="a" style="left:1563px;top:260px;width:1px;height:33px;background:#8C8C8C"></div>
<div class="a" style="left:1563px;top:292px;width:34px;height:1px;background:#8C8C8C"></div>
<div class="a" style="left:732px;top:294px;width:170px;height:38px;background:#FFFF00"></div>
<div class="a" style="left:720px;top:319px;width:6px;height:6px;background:#000"></div>
<div class="a" style="left:733px;top:297px;font-family:'Liberation Serif',serif;font-size:29px;line-height:38px;font-weight:400;color:#000;letter-spacing:0.3px">3 开标一览表</div>
<svg style="left:903px;top:307px" width="15" height="14" viewBox="0 0 13 11" preserveAspectRatio="none"><path d="M11.5 0.5V6.5H1.5M5 3L1.5 6.5L5 10" fill="none" stroke="#8C8C8C" stroke-width="1.2"/></svg>
<div class="a" style="left:771px;top:352px;font-family:'Liberation Serif',serif;font-size:19.3px;line-height:25px;font-weight:400;-webkit-text-stroke:0.45px #000;color:#000;">包号：001</div>
<div class="a" style="left:1294px;top:351px;font-family:'Liberation Serif',serif;font-size:19.3px;line-height:25px;font-weight:400;-webkit-text-stroke:0.45px #000;color:#000;">报价单位：</div>
<svg style="left:1399px;top:358px" width="11" height="10" viewBox="0 0 13 11" preserveAspectRatio="none"><path d="M11.5 0.5V6.5H1.5M5 3L1.5 6.5L5 10" fill="none" stroke="#A0A0A0" stroke-width="1.2"/></svg>
<div class="a" style="left:1388px;top:339px;width:39px;height:50px;border:4px solid #CA1428"></div>
<div class="a" style="left:1391px;top:354px;font-family:Liberation Sans;font-size:17px;line-height:20px;font-weight:bold;color:#000;transform:scaleX(0.55);transform-origin:left">%</div>
<div class="a" style="left:713px;top:388px;width:1px;height:445px;background:#000"></div>
<div class="a" style="left:853px;top:388px;width:1px;height:445px;background:#000"></div>
<div class="a" style="left:1051px;top:388px;width:1px;height:445px;background:#000"></div>
<div class="a" style="left:1193px;top:388px;width:1px;height:445px;background:#000"></div>
<div class="a" style="left:1426px;top:388px;width:1px;height:445px;background:#000"></div>
<div class="a" style="left:1530px;top:388px;width:1px;height:445px;background:#000"></div>
<div class="a" style="left:1581px;top:388px;width:1px;height:445px;background:#000"></div>
<div class="a" style="left:713px;top:388px;width:869px;height:1px;background:#000"></div>
<div class="a" style="left:713px;top:458px;width:869px;height:1px;background:#000"></div>
<div class="a" style="left:713px;top:832px;width:869px;height:1px;background:#000"></div>
<div class="a" style="left:744px;top:412px;font-family:'Liberation Serif',serif;font-size:19.3px;line-height:25px;font-weight:400;color:#000;letter-spacing:1px">项目名称</div>
<svg style="left:820px;top:418px" width="12" height="11" viewBox="0 0 13 11" preserveAspectRatio="none"><path d="M11.5 0.5V6.5H1.5M5 3L1.5 6.5L5 10" fill="none" stroke="#A0A0A0" stroke-width="1.2"/></svg>
<div class="a" style="left:913px;top:412px;font-family:'Liberation Serif',serif;font-size:19.3px;line-height:25px;font-weight:400;color:#000;letter-spacing:1px">投标总价</div>
<svg style="left:989px;top:418px" width="12" height="11" viewBox="0 0 13 11" preserveAspectRatio="none"><path d="M11.5 0.5V6.5H1.5M5 3L1.5 6.5L5 10" fill="none" stroke="#A0A0A0" stroke-width="1.2"/></svg>
<div class="a" style="left:1073px;top:412px;font-family:'Liberation Serif',serif;font-size:19.3px;line-height:25px;font-weight:400;color:#000;letter-spacing:1.1px">投标保证金</div>
<svg style="left:1171px;top:418px" width="12" height="11" viewBox="0 0 13 11" preserveAspectRatio="none"><path d="M11.5 0.5V6.5H1.5M5 3L1.5 6.5L5 10" fill="none" stroke="#A0A0A0" stroke-width="1.2"/></svg>
<div class="a" style="left:1270px;top:413px;font-family:'Liberation Serif',serif;font-size:19.3px;line-height:25px;font-weight:400;color:#000;letter-spacing:0.8px">履约期限</div>
<svg style="left:1347px;top:418px" width="12" height="11" viewBox="0 0 13 11" preserveAspectRatio="none"><path d="M11.5 0.5V6.5H1.5M5 3L1.5 6.5L5 10" fill="none" stroke="#A0A0A0" stroke-width="1.2"/></svg>
<div class="a" style="left:1439px;top:413px;font-family:'Liberation Serif',serif;font-size:19.3px;line-height:25px;font-weight:400;color:#000;letter-spacing:1px">履约地点</div>
<svg style="left:1516px;top:418px" width="12" height="11" viewBox="0 0 13 11" preserveAspectRatio="none"><path d="M11.5 0.5V6.5H1.5M5 3L1.5 6.5L5 10" fill="none" stroke="#A0A0A0" stroke-width="1.2"/></svg>
<div class="a" style="left:1536px;top:413px;font-family:'Liberation Serif',serif;font-size:19.3px;line-height:25px;font-weight:400;color:#000;letter-spacing:1px">备注</div>
<svg style="left:1574px;top:418px" width="8" height="11" viewBox="0 0 13 11" preserveAspectRatio="none"><path d="M11.5 0.5V6.5H1.5M5 3L1.5 6.5L5 10" fill="none" stroke="#A0A0A0" stroke-width="1.2"/></svg>
<svg style="left:1584px;top:399px" width="11" height="11" viewBox="0 0 13 11" preserveAspectRatio="none"><path d="M11.5 0.5V6.5H1.5M5 3L1.5 6.5L5 10" fill="none" stroke="#A0A0A0" stroke-width="1.2"/></svg>
<svg style="left:1584px;top:469px" width="11" height="11" viewBox="0 0 13 11" preserveAspectRatio="none"><path d="M11.5 0.5V6.5H1.5M5 3L1.5 6.5L5 10" fill="none" stroke="#A0A0A0" stroke-width="1.2"/></svg>
<div class="a" style="left:713px;top:610px;width:140px;text-align:center;font-family:'Liberation Serif',serif;font-size:19.3px;line-height:25px;font-weight:400;-webkit-text-stroke:0.45px #000;color:#000;letter-spacing:0.3px">盘锦市公安局</div>
<div class="a" style="left:713px;top:635px;width:140px;text-align:center;font-family:'Liberation Serif',serif;font-size:19.3px;line-height:25px;font-weight:400;-webkit-text-stroke:0.45px #000;color:#000;letter-spacing:0.3px">本级油料购置</div>
<div class="a" style="left:713px;top:660px;width:140px;text-align:center;font-family:'Liberation Serif',serif;font-size:19.3px;line-height:25px;font-weight:400;-webkit-text-stroke:0.45px #000;color:#000;letter-spacing:0.3px">服务采购项目</div>
<svg style="left:841px;top:666px" width="11" height="11" viewBox="0 0 13 11" preserveAspectRatio="none"><path d="M11.5 0.5V6.5H1.5M5 3L1.5 6.5L5 10" fill="none" stroke="#A0A0A0" stroke-width="1.2"/></svg>
<div class="a" style="left:857px;top:623px;font-family:'Liberation Serif',serif;font-size:19.3px;line-height:25px;font-weight:400;-webkit-text-stroke:0.45px #000;color:#000;">小写：</div>
<svg style="left:914px;top:629px" width="12" height="11" viewBox="0 0 13 11" preserveAspectRatio="none"><path d="M11.5 0.5V6.5H1.5M5 3L1.5 6.5L5 10" fill="none" stroke="#A0A0A0" stroke-width="1.2"/></svg>
<div class="a" style="left:857px;top:648px;font-family:'Liberation Serif',serif;font-size:19.3px;line-height:25px;font-weight:400;-webkit-text-stroke:0.45px #000;color:#000;">大写：</div>
<svg style="left:914px;top:654px" width="12" height="11" viewBox="0 0 13 11" preserveAspectRatio="none"><path d="M11.5 0.5V6.5H1.5M5 3L1.5 6.5L5 10" fill="none" stroke="#A0A0A0" stroke-width="1.2"/></svg>
<div class="a" style="left:1051px;top:623px;width:142px;text-align:center;font-family:'Liberation Serif',serif;font-size:19.3px;line-height:25px;font-weight:400;-webkit-text-stroke:0.45px #000;color:#000">本项目不提交</div>
<div class="a" style="left:1051px;top:648px;width:142px;text-align:center;font-family:'Liberation Serif',serif;font-size:19.3px;line-height:25px;font-weight:400;-webkit-text-stroke:0.45px #000;color:#000">投标保证金</div>
<svg style="left:1171px;top:654px" width="12" height="11" viewBox="0 0 13 11" preserveAspectRatio="none"><path d="M11.5 0.5V6.5H1.5M5 3L1.5 6.5L5 10" fill="none" stroke="#A0A0A0" stroke-width="1.2"/></svg>
<div class="a" style="left:1193px;top:460px;width:233px;text-align:center;font-family:'Liberation Serif',serif;font-size:19.3px;line-height:25px;font-weight:400;-webkit-text-stroke:0.45px #000;color:#000;letter-spacing:0.35px;text-indent:0.35px">自签订合同之日起服务满</div>
<div class="a" style="left:1193px;top:485px;width:233px;text-align:center;font-family:'Liberation Serif',serif;font-size:19.3px;line-height:25px;font-weight:400;-webkit-text-stroke:0.45px #000;color:#000;letter-spacing:0.35px;text-indent:0.35px">一年，服务期满后，根据</div>
<div class="a" style="left:1193px;top:510px;width:233px;text-align:center;font-family:'Liberation Serif',serif;font-size:19.3px;line-height:25px;font-weight:400;-webkit-text-stroke:0.45px #000;color:#000;letter-spacing:0.35px;text-indent:0.35px">辽宁省财政厅文件<span style="display:inline-block;width:19px;text-align:right">“</span>辽财</div>
<div class="a" style="left:1193px;top:535px;width:233px;text-align:center;font-family:'Liberation Serif',serif;font-size:19.3px;line-height:25px;font-weight:400;-webkit-text-stroke:0.45px #000;color:#000;letter-spacing:0.35px;text-indent:0.35px">综规[2020]9 号<span style="display:inline-block;width:12px;text-align:left">”</span><span style="margin-left:-6px">《</span>政府购</div>
<div class="a" style="left:1193px;top:560px;width:233px;text-align:center;font-family:'Liberation Serif',serif;font-size:19.3px;line-height:25px;font-weight:400;-webkit-text-stroke:0.45px #000;color:#000;letter-spacing:0.35px;text-indent:0.35px">买服务管理办法》，在采购</div>
<div class="a" style="left:1193px;top:585px;width:233px;text-align:center;font-family:'Liberation Serif',serif;font-size:19.3px;line-height:25px;font-weight:400;-webkit-text-stroke:0.45px #000;color:#000;letter-spacing:0.35px;text-indent:0.35px">单位落实下一年度财政预</div>
<div class="a" style="left:1193px;top:610px;width:233px;text-align:center;font-family:'Liberation Serif',serif;font-size:19.3px;line-height:25px;font-weight:400;-webkit-text-stroke:0.45px #000;color:#000;letter-spacing:0.35px;text-indent:0.35px">算的前提下，且本项目服</div>
<div class="a" style="left:1193px;top:635px;width:233px;text-align:center;font-family:'Liberation Serif',serif;font-size:19.3px;line-height:25px;font-weight:400;-webkit-text-stroke:0.45px #000;color:#000;letter-spacing:0.35px;text-indent:0.35px">务内容及服务要求不变、</div>
<div class="a" style="left:1193px;top:660px;width:233px;text-align:center;font-family:'Liberation Serif',serif;font-size:19.3px;line-height:25px;font-weight:400;-webkit-text-stroke:0.45px #000;color:#000;letter-spacing:0.35px;text-indent:0.35px">价格不变，供需双方协商</div>
<div class="a" style="left:1193px;top:685px;width:233px;text-align:center;font-family:'Liberation Serif',serif;font-size:19.3px;line-height:25px;font-weight:400;-webkit-text-stroke:0.45px #000;color:#000;letter-spacing:0.35px;text-indent:0.35px">同意，经财政批准后，在</div>
<div class="a" style="left:1193px;top:710px;width:233px;text-align:center;font-family:'Liberation Serif',serif;font-size:19.3px;line-height:25px;font-weight:400;-webkit-text-stroke:0.45px #000;color:#000;letter-spacing:0.35px;text-indent:0.35px">年度预算能够保障的前提</div>
<div class="a" style="left:1193px;top:735px;width:233px;text-align:center;font-family:'Liberation Serif',serif;font-size:19.3px;line-height:25px;font-weight:400;-webkit-text-stroke:0.45px #000;color:#000;letter-spacing:0.35px;text-indent:0.35px">下，可依据本次招标结果</div>
<div class="a" style="left:1193px;top:760px;width:233px;text-align:center;font-family:'Liberation Serif',serif;font-size:19.3px;line-height:25px;font-weight:400;-webkit-text-stroke:0.45px #000;color:#000;letter-spacing:0.35px;text-indent:0.35px">所签订的合同续签一年，</div>
<div class="a" style="left:1193px;top:785px;width:233px;text-align:center;font-family:'Liberation Serif',serif;font-size:19.3px;line-height:25px;font-weight:400;-webkit-text-stroke:0.45px #000;color:#000;letter-spacing:0.35px;text-indent:0.35px">续签合同须一年一签。续</div>
<div class="a" style="left:1193px;top:810px;width:233px;text-align:center;font-family:'Liberation Serif',serif;font-size:19.3px;line-height:25px;font-weight:400;-webkit-text-stroke:0.45px #000;color:#000;letter-spacing:0.35px;text-indent:0.35px">签不能超过两年。</div>
<svg style="left:1387px;top:813px" width="12" height="11" viewBox="0 0 13 11" preserveAspectRatio="none"><path d="M11.5 0.5V6.5H1.5M5 3L1.5 6.5L5 10" fill="none" stroke="#A0A0A0" stroke-width="1.2"/></svg>
<svg style="left:1261px;top:705px" width="58" height="4" viewBox="0 0 58 4"><path d="M0 3 L1 1 L3 3 L5 1 L7 3 L9 1 L11 3 L13 1 L15 3 L17 1 L19 3 L21 1 L23 3 L25 1 L27 3 L29 1 L31 3 L33 1 L35 3 L37 1 L39 3 L41 1 L43 3 L45 1 L47 3 L49 1 L51 3 L53 1 L55 3 L57 1" fill="none" stroke="#2F62D0" stroke-width="1"/></svg>
<div class="a" style="left:1426px;top:623px;width:104px;text-align:center;font-family:'Liberation Serif',serif;font-size:19.3px;line-height:25px;font-weight:400;-webkit-text-stroke:0.45px #000;color:#000">采购人指</div>
<div class="a" style="left:1426px;top:648px;width:104px;text-align:center;font-family:'Liberation Serif',serif;font-size:19.3px;line-height:25px;font-weight:400;-webkit-text-stroke:0.45px #000;color:#000">定地点</div>
<svg style="left:1507px;top:654px" width="12" height="11" viewBox="0 0 13 11" preserveAspectRatio="none"><path d="M11.5 0.5V6.5H1.5M5 3L1.5 6.5L5 10" fill="none" stroke="#A0A0A0" stroke-width="1.2"/></svg>
<svg style="left:1554px;top:640px" width="12" height="11" viewBox="0 0 13 11" preserveAspectRatio="none"><path d="M11.5 0.5V6.5H1.5M5 3L1.5 6.5L5 10" fill="none" stroke="#A0A0A0" stroke-width="1.2"/></svg>
<svg style="left:771px;top:842px" width="11" height="11" viewBox="0 0 13 11" preserveAspectRatio="none"><path d="M11.5 0.5V6.5H1.5M5 3L1.5 6.5L5 10" fill="none" stroke="#A0A0A0" stroke-width="1.2"/></svg>
<svg style="left:771px;top:880px" width="11" height="11" viewBox="0 0 13 11" preserveAspectRatio="none"><path d="M11.5 0.5V6.5H1.5M5 3L1.5 6.5L5 10" fill="none" stroke="#A0A0A0" stroke-width="1.2"/></svg>
<div class="a" style="left:770px;top:911px;font-family:'Liberation Serif',serif;font-size:19.3px;line-height:25px;font-weight:400;color:#000;letter-spacing:0.37px">注：此表中，投标总价应和价格明细表的总价相一致。</div>
<svg style="left:1233px;top:917px" width="12" height="11" viewBox="0 0 13 11" preserveAspectRatio="none"><path d="M11.5 0.5V6.5H1.5M5 3L1.5 6.5L5 10" fill="none" stroke="#A0A0A0" stroke-width="1.2"/></svg>
<svg style="left:1167px;top:955px" width="11" height="11" viewBox="0 0 13 11" preserveAspectRatio="none"><path d="M11.5 0.5V6.5H1.5M5 3L1.5 6.5L5 10" fill="none" stroke="#A0A0A0" stroke-width="1.2"/></svg>
<div class="a" style="left:771px;top:992px;width:12px;height:7px;overflow:hidden">
<svg style="left:0;top:0" width="11" height="11" viewBox="0 0 11 10"><path d="M10 0.5V5.5H1.5M4.5 2.5L1.5 5.5L4.5 8.5" fill="none" stroke="#A6A6A6" stroke-width="1.1"/></svg></div>
</body></html>
